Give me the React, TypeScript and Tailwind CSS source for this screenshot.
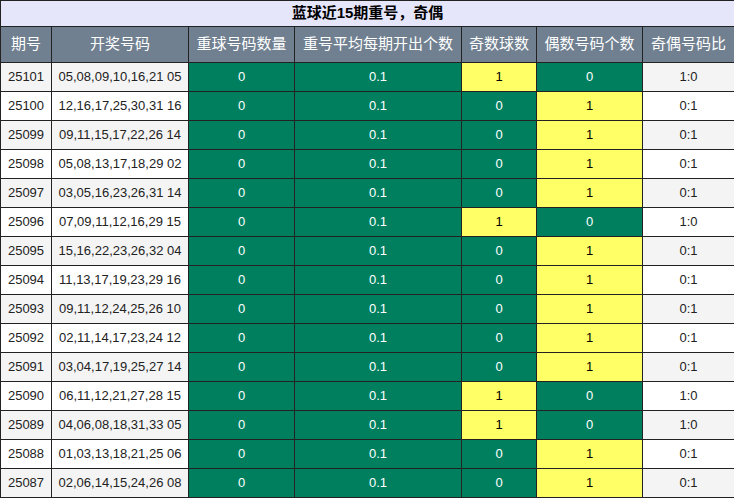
const rows: [string, string, number][] = [
["25101","05,08,09,10,16,21 05",1],
["25100","12,16,17,25,30,31 16",0],
["25099","09,11,15,17,22,26 14",0],
["25098","05,08,13,17,18,29 02",0],
["25097","03,05,16,23,26,31 14",0],
["25096","07,09,11,12,16,29 15",1],
["25095","15,16,22,23,26,32 04",0],
["25094","11,13,17,19,23,29 16",0],
["25093","09,11,12,24,25,26 10",0],
["25092","02,11,14,17,23,24 12",0],
["25091","03,04,17,19,25,27 14",0],
["25090","06,11,12,21,27,28 15",1],
["25089","04,06,08,18,31,33 05",1],
["25088","01,03,13,18,21,25 06",0],
["25087","02,06,14,15,24,26 08",0],
];
const widths=[51,137,106,167,75,106,92];
const heads=["期号","开奖号码","重球号码数量","重号平均每期开出个数","奇数球数","偶数号码个数","奇偶号码比"];
export default function App(){
  const G="bg-[#007f5f] text-white";
  const Y="bg-[#ffff66] text-black";
  return (
    <div className="w-[734px] h-[499px] overflow-hidden bg-white" style={{fontFamily:'"Liberation Sans","Noto Sans CJK SC",sans-serif'}}>
      <table className="border-collapse table-fixed w-[734px] text-[13px]">
        <colgroup>{widths.map((w,i)=><col key={i} style={{width:w}}/>)}</colgroup>
        <thead>
          <tr><th colSpan={7} className="h-[26px] bg-[#e6e6fa] border border-[#222] text-[15px] font-bold text-black">蓝球近15期重号，奇偶</th></tr>
          <tr>{heads.map(h=><th key={h} className="h-[36px] bg-[#708090] border border-[#222] font-normal text-white text-[15px]">{h}</th>)}</tr>
        </thead>
        <tbody>
          {rows.map(([p,n,o],i)=>{
            const bg=i%2===0?"bg-[#f4f4f4]":"bg-white";
            return (
            <tr key={p} className="h-[29px] text-center">
              <td className={`${bg} border border-[#222] text-[#222]`}>{p}</td>
              <td className={`${bg} border border-[#222] text-[#222]`}>{n}</td>
              <td className={`${G} border border-[#222]`}>0</td>
              <td className={`${G} border border-[#222]`}>0.1</td>
              <td className={`${o?Y:G} border border-[#222]`}>{o}</td>
              <td className={`${o?G:Y} border border-[#222]`}>{o?0:1}</td>
              <td className={`${bg} border border-[#222] text-[#222]`}>{o?"1:0":"0:1"}</td>
            </tr>);
          })}
        </tbody>
      </table>
    </div>
  );
}
